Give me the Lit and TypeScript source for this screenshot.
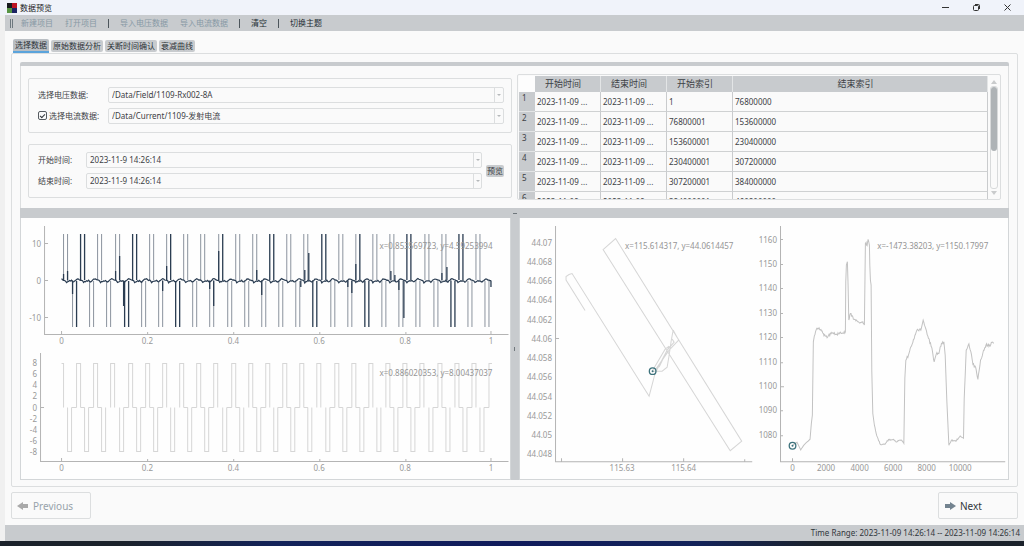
import { LitElement, html, svg, css } from "lit";
import { customElement, property } from "lit/decorators.js";

type Point = [number, number];

const toPath = (points: Point[]) =>
  points.map(([x, y], i) => `${i ? "L" : "M"}${x.toFixed(1)} ${y.toFixed(1)}`).join("");

/** Small repeatable noise source in the range -1..1. */
const noise = (seed: number) => {
  const v = Math.sin(seed * 127.1) * 43758.5453;
  return (v - Math.floor(v)) * 2 - 1;
};

const PERIODS = 25;
const PERIOD = 17.17;

const chartStyles = css`
  :host { display: block; min-width: 0; }
  svg { display: block; width: 100%; height: auto; overflow: visible; }
  text { font: 8px "Noto Sans", "Open Sans", sans-serif; fill: #999; }
  .end { text-anchor: end; }
  .mid { text-anchor: middle; }
  .axis { stroke: #b4b4b4; fill: none; }
  .readout { fill: #959595; }
  .trace { fill: none; stroke: #d6d6d6; }
  .height { fill: none; stroke: #c2c2c2; }
  .light { fill: none; stroke: #8b939e; }
  .dark { fill: none; stroke: #2b3d52; stroke-width: 1.3; }
  .base { fill: none; stroke: #2b3d52; stroke-width: 1.2; }
  .marker { fill: none; stroke: #3d727c; stroke-width: 1.3; }
  .dot { fill: #3d727c; }
`;

const timeLabels = (y: number) =>
  ["0", "0.2", "0.4", "0.6", "0.8", "1"].map(
    (t, i) => svg`<text class="mid" x=${40.5 + i * 85.8} y=${y}>${t}</text>`
  );

@customElement("voltage-chart")
export class VoltageChart extends LitElement {
  static styles = chartStyles;

  private spikes() {
    const darkTop = [1, 4, 12, 15, 20, 23];
    const halfTop = [6, 9, 17];
    const darkBottom = [3, 6, 14, 17, 22];
    const light: string[] = [];
    const dark: string[] = [];
    for (let k = 0; k < PERIODS; k++) {
      const x = Math.round(42 + k * PERIOD) + 0.5;
      const top = (v: number, strong: boolean) => (strong ? dark : light).push(`M${v} 15V61`);
      const bottom = (v: number, strong: boolean) => (strong ? dark : light).push(`M${v} 62V108`);
      top(x, darkTop.includes(k));
      top(x + 4, darkTop.includes(k) || halfTop.includes(k));
      bottom(x + 9, darkBottom.includes(k));
      bottom(x + 13, darkBottom.includes(k) || k === 0);
    }
    const partial: Point[] = [
      [42, 55], [46, 52], [51, 75], [98, 37], [94, 52], [102, 87], [145, 47], [141, 72],
      [188, 70], [192, 87], [197, 32], [235, 51], [240, 76], [287, 34], [283, 51], [291, 91],
      [279, 68], [326, 68], [330, 74], [334, 45], [369, 52], [373, 56], [377, 71], [382, 99],
      [420, 54], [425, 48], [429, 78], [469, 68],
    ];
    partial.forEach(([x, y]) => dark.push(`M${x + 0.5} 61.5V${y}`));
    return svg`<path class="light" d=${light.join("")}></path><path class="dark" d=${dark.join("")}></path>`;
  }

  private baseline() {
    const shape = [-1, -0.2, 0.1, 0.2, 0.8, 2.6, 1.7, 1.4, 0.7, 1.1, 0.4, 1.5, 2, 1, 0.2, -0.9, -1.2];
    const pts: Point[] = [];
    for (let i = 0; i < 430; i++) {
      pts.push([40.5 + i, 61 + shape[i % 17] + noise(i) * 0.35]);
    }
    return toPath(pts);
  }

  render() {
    return html`<svg viewBox="0 -1 488 131" role="img" aria-label="电压波形">
      <path class="axis" d="M23.5 7V115.5H487M24 24.5h3M24 61.5h3M24 98.5h3M40.5 112v3M126.5 113v2M212.5 113v2M298.5 113v2M384.5 113v2M469.5 112v3"></path>
      <text class="end" x="20" y="28">10</text>
      <text class="end" x="20" y="65">0</text>
      <text class="end" x="20" y="102">-10</text>
      ${timeLabels(125)}
      ${this.spikes()}
      <path class="base" d=${this.baseline()}></path>
      <text class="readout end" x="471" y="30">x=0.853569723, y=4.59253994</text>
    </svg>`;
  }
}

@customElement("current-chart")
export class CurrentChart extends LitElement {
  static styles = chartStyles;

  private wave() {
    const out: string[] = ["M40.5 14.5H42.5V58.5"];
    for (let k = 0; k < PERIODS; k++) {
      const x = Math.round(46 + k * PERIOD) + 0.5;
      out.push(`M${x} 58.5V102.5h4V58.5`);
      if (k % 4 !== 2) out.push(`M${x + 4} 58.5h5`);
      if (k < PERIODS - 1) {
        out.push(`M${x + 9} 58.5V14.5h4V58.5`);
        if (k % 3 !== 2) out.push(`M${x + 13} 58.5h4`);
      } else {
        out.push(`M${x + 9} 58.5V14.5h3`);
      }
    }
    return out.join("");
  }

  render() {
    const levels = [8, 6, 4, 2, 0, -2, -4, -6, -8];
    return html`<svg viewBox="0 0 488 130" role="img" aria-label="电流波形">
      <path class="axis" d="M19.5 4V112.5H487M20 58.5h3M40.5 109v3M126.5 110v2M212.5 110v2M298.5 110v2M384.5 110v2M469.5 109v3"></path>
      ${levels.map((v) => svg`<text class="end" x="16" y=${61.5 - v * 5.57}>${v}</text>`)}
      ${timeLabels(122)}
      <path class="trace" d=${this.wave()}></path>
      <text class="readout end" x="471" y="27">x=0.886020353, y=8.00437037</text>
    </svg>`;
  }
}

@customElement("track-chart")
export class TrackChart extends LitElement {
  static styles = chartStyles;

  render() {
    const lat = ["44.07", "44.068", "44.066", "44.064", "44.062", "44.06", "44.058", "44.056", "44.054", "44.052", "44.05", "44.048"];
    return html`<svg viewBox="1 -1 245 261" role="img" aria-label="航迹">
      <path class="axis" d="M36.5 7V242.5H233M37 119.5h3M42.5 239v3M103.5 239v3M164.5 239v3M225.5 240v2"></path>
      ${lat.map((t, i) => svg`<text class="end" x="33" y=${26.5 + i * 19.25}>${t}</text>`)}
      <text class="mid" x="103" y="252">115.63</text>
      <text class="mid" x="164.5" y="252">115.64</text>
      <path class="trace" d="M66 91.5L47 61V57.5L50 55.5L53 54.5L130 177L136 154L148 131L155 123L153 120M84 30.5L96.5 19.5L222.5 222L211 231.5ZM154 111L159.5 121L150 131L136 151M154 111L152 122L150 136L148 148L143 152H134M133 152L146 130L150 127L140 148"></path>
      <circle class="marker" cx="133.5" cy="152" r="3.3"></circle>
      <circle class="dot" cx="133.5" cy="152" r="1"></circle>
      <text class="readout" x="106" y="30">x=115.614317, y=44.0614457</text>
    </svg>`;
  }
}

@customElement("height-chart")
export class HeightChart extends LitElement {
  static styles = chartStyles;

  /** Knots of the altitude curve in thirds of a unit, with the jitter that follows each. */
  private static knots: [number, number, number][] = [
    [83, 720, 0], [90, 715, 0], [96, 711, 0], [107, 734, 1], [118, 718, 1], [130, 707, 0], [135, 702, 0],
    [139, 655, 0], [142, 630, 0], [145, 410, 0], [148, 392, 3], [155, 370, 3], [162, 368, 4], [175, 385, 5],
    [186, 398, 5], [200, 382, 5], [215, 387, 5], [230, 385, 4], [241, 380, 0], [242, 230, 0], [244, 180, 0],
    [247, 170, 0], [249, 240, 0], [251, 345, 3], [256, 325, 4], [265, 342, 3], [280, 350, 4], [293, 350, 3],
    [298, 360, 0], [301, 115, 0], [303, 112, 4], [306, 122, 3], [309, 103, 2], [313, 120, 0], [314, 180, 0],
    [316, 225, 0], [318, 240, 0], [320, 500, 0], [323, 625, 0], [328, 660, 1], [335, 692, 2], [346, 718, 1],
    [360, 717, 2], [370, 703, 2], [384, 703, 2], [393, 710, 2], [405, 704, 2], [414, 710, 0], [416, 714, 0],
    [419, 520, 0], [422, 465, 4], [430, 450, 5], [437, 425, 5], [445, 403, 5], [455, 375, 5], [463, 372, 6],
    [469, 368, 0], [474, 345, 2], [480, 365, 3], [490, 400, 5], [500, 428, 6], [507, 470, 2], [513, 448, 5],
    [521, 445, 6], [529, 415, 4], [536, 410, 0], [540, 450, 0], [545, 590, 0], [551, 720, 1], [559, 705, 2],
    [572, 708, 2], [585, 692, 1], [595, 699, 0], [597, 580, 4], [600, 510, 3], [603, 435, 3], [611, 416, 3],
    [617, 440, 5], [623, 478, 5], [631, 485, 2], [638, 523, 3], [646, 465, 5], [655, 435, 5], [662, 420, 7],
    [673, 420, 5], [680, 412, 3], [685, 415, 0],
  ];

  private curve() {
    const pts: Point[] = [];
    const k = HeightChart.knots;
    for (let i = 0; i < k.length - 1; i++) {
      const [x0, y0, j] = k[i];
      const [x1, y1] = k[i + 1];
      const steps = j ? Math.max(1, Math.round((x1 - x0) / 2)) : 1;
      for (let s = 0; s < steps; s++) {
        const t = s / steps;
        pts.push([(x0 + (x1 - x0) * t) / 3, (y0 + (y1 - y0) * t + (s ? noise(i * 31 + s) * j : 0)) / 3 - 14]);
      }
    }
    const last = k[k.length - 1];
    pts.push([last[0] / 3, last[1] / 3 - 14]);
    return toPath(pts);
  }

  render() {
    const levels = [1160, 1150, 1140, 1130, 1120, 1110, 1100, 1090, 1080];
    const fids = [0, 2000, 4000, 6000, 8000, 10000];
    return html`<svg viewBox="0 -1 243 261" role="img" aria-label="高程">
      <path class="axis" d="M15.5 7V242.5H240M16 20.5h2M16 45.5h2M16 69.5h2M16 94.5h2M16 118.5h2M16 143.5h2M16 167.5h3M16 191.5h2M16 216.5h2M27.5 239v3"></path>
      ${levels.map((v, i) => svg`<text class="end" x="12" y=${23.5 + i * 24.4}>${v}</text>`)}
      ${fids.map((v, i) => svg`<text class="mid" x=${27.5 + i * 33.5} y="252">${v}</text>`)}
      <path class="height" d=${this.curve()}></path>
      <circle class="marker" cx="27.5" cy="226.5" r="3.3"></circle>
      <circle class="dot" cx="27.5" cy="226.5" r="1"></circle>
      <text class="readout end" x="223" y="30">x=-1473.38203, y=1150.17997</text>
    </svg>`;
  }
}

@customElement("segment-table")
export class SegmentTable extends LitElement {
  @property({ attribute: false }) rows: [string, string][] = [
    ["1", "76800000"],
    ["76800001", "153600000"],
    ["153600001", "230400000"],
    ["230400001", "307200000"],
    ["307200001", "384000000"],
    ["384000001", "460800000"],
  ];

  static styles = css`
    :host {
      display: flex;
      box-sizing: border-box;
      min-width: 0;
      overflow: hidden;
      border: 1px solid #dcdedf;
      border-radius: 2px;
      padding: 1px 1px 0;
      gap: 1px;
    }
    .view { flex: 1; min-width: 0; height: 123px; overflow: hidden; }
    table { width: 100%; table-layout: fixed; border-collapse: separate; border-spacing: 0; }
    th, td { box-sizing: border-box; font-weight: 400; font-size: 8px; line-height: 12px; padding: 0; white-space: nowrap; }
    thead th { height: 16px; background: #c8cbce; font-size: 9px; border-right: 1px solid #e3e5e6; padding-right: 9px; }
    thead th:first-child { background: #fdfdfd; border: 0; }
    tbody th { height: 20px; background: #c8cbce; border-bottom: 1px solid #e3e5e6; vertical-align: top; text-align: left; padding-left: 3px; }
    tbody td { border-right: 1px solid #c9cbcd; border-bottom: 1px solid #cfd1d2; padding-left: 2px; }
    .index { width: 16px; }
    .time { width: 66px; }
    .last { width: auto; }
    .scroll { width: 10px; display: flex; flex-direction: column; align-items: center; gap: 2px; padding: 4px 0; box-sizing: border-box; }
    .track { flex: 1; width: 8px; border: 1px solid #d8dadb; border-radius: 3px; box-sizing: border-box; display: flex; justify-content: center; }
    .thumb { width: 6px; height: 64px; flex: none; background: #aeb3b6; border-radius: 3px; }
    .arrow { display: block; fill: #c9cbcc; }
  `;

  render() {
    return html`
      <div class="view">
        <table>
          <colgroup><col class="index" /><col class="time" /><col class="time" /><col class="time" /><col class="last" /></colgroup>
          <thead>
            <tr><th></th><th scope="col">开始时间</th><th scope="col">结束时间</th><th scope="col">开始索引</th><th scope="col">结束索引</th></tr>
          </thead>
          <tbody>
            ${this.rows.map(
              ([from, to], i) => html`<tr>
                <th scope="row">${i + 1}</th><td>2023-11-09 ...</td><td>2023-11-09 ...</td><td>${from}</td><td>${to}</td>
              </tr>`
            )}
          </tbody>
        </table>
      </div>
      <div class="scroll" aria-hidden="true">
        <svg class="arrow" width="6" height="4" viewBox="0 0 6 4"><path d="M0 4L3 0L6 4Z"></path></svg>
        <div class="track"><div class="thumb"></div></div>
        <svg class="arrow" width="6" height="4" viewBox="0 0 6 4"><path d="M0 0L3 4L6 0Z"></path></svg>
      </div>
    `;
  }
}

@customElement("app-root")
export class AppRoot extends LitElement {
  static styles = css`
    :host {
      display: flex;
      flex-direction: column;
      min-height: 100vh;
      box-sizing: border-box;
      background: #fafafa;
      color: #3d4145;
      font: 8px/12px "Noto Sans", "Open Sans", "Noto Sans CJK SC", sans-serif;
    }
    button, input, select { font: inherit; color: inherit; margin: 0; padding: 0; border: 0; background: none; border-radius: 0; }
    .title { display: flex; align-items: center; height: 15px; background: #f0f3fa; padding: 0 12px 0 7px; color: #222; gap: 3px; }
    .title h1 { font-size: 8px; line-height: 12px; font-weight: 400; margin: 0; flex: 1; }
    .title svg { display: block; }
    .controls { display: flex; gap: 22px; }
    .frame { flex: 1; display: flex; flex-direction: column; border-left: 5px solid #f0f0f0; }
    .toolbar { display: flex; align-items: center; height: 16px; background: #c8cbce; padding-left: 5px; }
    .toolbar button { padding: 0 6px; color: #222b32; }
    .toolbar button:disabled { color: #8799a5; }
    .grip { width: 1px; height: 9px; border: solid #6d787f; border-width: 0 1px; margin-right: 2px; }
    .sep { width: 1px; height: 9px; background: #4d565c; margin: 0 5px; }
    .body { flex: 1; display: flex; flex-direction: column; padding: 8px 6px 6px; }
    .tabs { display: flex; align-items: center; gap: 2px; height: 14px; padding-left: 2px; }
    .tabs button { height: 12px; padding: 0 2px; background: #c8cbce; border-radius: 2px; color: #2d3338; }
    .tabs .on { height: 14px; border-bottom: 2px solid #5ba4dc; background: #b9bec3; border-radius: 2px 2px 0 0; }
    .pane { border: 1px solid #dcdedf; border-radius: 2px; padding: 8px 8px 6px; flex: 1; }
    .work { border-top: 4px solid #c8cbce; border-radius: 2px; }
    .upper { display: grid; grid-template-columns: 1fr 1fr; gap: 5px; padding: 8px 7px; border: solid #dcdedf; border-width: 0 1px; }
    .forms { display: flex; flex-direction: column; gap: 11px; padding: 4px 0 2px; min-width: 0; }
    .group { flex: 1; display: flex; align-items: center; gap: 4px; border: 1px solid #dcdedf; border-radius: 2px; padding: 0 7px 0 9px; }
    .fields { flex: 1; display: grid; align-items: center; min-width: 0; row-gap: 5px; }
    .data { grid-template-columns: 70px 1fr; }
    .dates { grid-template-columns: 48px 1fr; }
    .label { display: flex; align-items: center; gap: 2px; white-space: nowrap; }
    .label input { appearance: none; width: 9px; height: 9px; border: 1px solid #555b60; border-radius: 2px; display: grid; place-items: center; }
    .label input:checked::after { content: ""; width: 4px; height: 2px; border: solid #33383c; border-width: 0 0 1px 1px; transform: rotate(-45deg); }
    .combo { display: flex; height: 16px; box-sizing: border-box; border: 1px solid #dcdedf; border-radius: 2px; min-width: 0; }
    .combo select, .combo input { flex: 1; min-width: 0; appearance: none; padding-left: 3px; outline: none; }
    .drop { width: 8px; border-left: 1px solid #dcdedf; display: grid; place-items: center; }
    .drop svg { display: block; fill: #b5b8ba; }
    .preview { height: 12px; padding: 0 1px; background: #c8cbce; border-radius: 2px; }
    .bar { height: 10px; background: #c8cbce; display: grid; place-items: center; }
    .bar i { width: 4px; height: 1px; background: #70777c; }
    .charts { display: grid; grid-template-columns: 1fr 8px 1fr; background: #c8cbce; }
    .plots { background: #fefefe; border: 1px solid #d3d6d8; border-top: 0; min-width: 0; }
    .pair { display: grid; grid-template-columns: 245fr 243fr; }
    .split { display: grid; place-items: center; }
    .split i { width: 1px; height: 4px; background: #70777c; }
    .nav { display: flex; justify-content: space-between; padding-top: 5px; }
    .nav button { width: 80px; height: 27px; box-sizing: border-box; border: 1px solid #dcdedf; border-radius: 2px; display: flex; align-items: center; gap: 4px; padding-left: 5px; font-size: 10px; color: #30363b; }
    .nav button:disabled { color: #98a3aa; }
    .nav svg { display: block; fill: #73838f; }
    .nav button:disabled svg { fill: #a9a9a9; }
    .status { height: 16px; line-height: 16px; background: #c8cbce; text-align: right; padding-right: 4px; color: #30363b; }
    .edge { height: 5px; background: linear-gradient(90deg, #1b222b 12%, #13235a 27%, #101b5c 50%, #13235a 68%, #1b222b 80%); }
  `;

  private arrow() {
    return html`<svg width="4" height="2" viewBox="0 0 4 2" aria-hidden="true"><path d="M0 0h4L2 2Z"></path></svg>`;
  }

  private picker(id: string, value: string) {
    return html`<div class="combo">
      <select id=${id} aria-label="数据路径"><option>${value}</option></select><span class="drop">${this.arrow()}</span>
    </div>`;
  }

  private dateField(id: string) {
    return html`<div class="combo">
      <input id=${id} type="text" value="2023-11-9 14:26:14" /><button class="drop" aria-label="打开日历">${this.arrow()}</button>
    </div>`;
  }

  render() {
    return html`
      <header class="title">
        <svg width="10" height="10" viewBox="0 0 10 10" aria-hidden="true">
          <rect width="10" height="10" fill="#17191d"></rect>
          <rect x="5" width="5" height="5" fill="#bd1422"></rect>
          <rect y="5" width="5" height="5" fill="#579443"></rect>
          <rect x="5" y="5" width="5" height="5" fill="#1b2463"></rect>
        </svg>
        <h1>数据预览</h1>
        <div class="controls">
          <button aria-label="最小化"><svg width="9" height="9" viewBox="0 0 9 9"><path d="M1 4.5H8" stroke="#333"></path></svg></button>
          <button aria-label="还原"><svg width="9" height="9" viewBox="0 0 9 9" fill="none" stroke="#333"><rect x="1.5" y="2.5" width="5" height="5" rx="1"></rect><path d="M3 1.5H6.5Q7.5 1.5 7.5 2.5V6"></path></svg></button>
          <button aria-label="关闭"><svg width="9" height="9" viewBox="0 0 9 9"><path d="M1.5 1.5L7.5 7.5M7.5 1.5L1.5 7.5" stroke="#333"></path></svg></button>
        </div>
      </header>
      <div class="frame">
        <nav class="toolbar">
          <span class="grip"></span>
          <button disabled>新建项目</button><button disabled>打开项目</button><span class="sep"></span>
          <button disabled>导入电压数据</button><button disabled>导入电流数据</button><span class="sep"></span>
          <button>清空</button><span class="sep"></span><button>切换主题</button>
        </nav>
        <main class="body">
          <div class="tabs" role="tablist">
            <button class="on" role="tab" aria-selected="true">选择数据</button>
            <button role="tab">原始数据分析</button>
            <button role="tab">关断时间确认</button>
            <button role="tab">衰减曲线</button>
          </div>
          <section class="pane">
            <div class="work">
              <div class="upper">
                <div class="forms">
                  <div class="group">
                    <div class="fields data">
                      <label class="label" for="voltage">选择电压数据:</label>
                      ${this.picker("voltage", "/Data/Field/1109-Rx002-8A")}
                      <label class="label"><input type="checkbox" checked />选择电流数据:</label>
                      ${this.picker("current", "/Data/Current/1109-发射电流")}
                    </div>
                  </div>
                  <div class="group">
                    <div class="fields dates">
                      <label class="label" for="from">开始时间:</label>
                      ${this.dateField("from")}
                      <label class="label" for="to">结束时间:</label>
                      ${this.dateField("to")}
                    </div>
                    <button class="preview">预览</button>
                  </div>
                </div>
                <segment-table></segment-table>
              </div>
              <div class="bar"><i></i></div>
              <div class="charts">
                <div class="plots"><voltage-chart></voltage-chart><current-chart></current-chart></div>
                <div class="split"><i></i></div>
                <div class="plots pair"><track-chart></track-chart><height-chart></height-chart></div>
              </div>
            </div>
          </section>
          <div class="nav">
            <button disabled><svg width="12" height="8" viewBox="0 0 12 8" aria-hidden="true"><path d="M0 4L6 0V2H11V6H6V8Z"></path></svg>Previous</button>
            <button><svg width="12" height="8" viewBox="0 0 12 8" aria-hidden="true"><path d="M12 4L6 0V2H1V6H6V8Z"></path></svg>Next</button>
          </div>
        </main>
        <footer class="status">Time Range: 2023-11-09 14:26:14 -- 2023-11-09 14:26:14</footer>
      </div>
      <div class="edge"></div>
    `;
  }
}
